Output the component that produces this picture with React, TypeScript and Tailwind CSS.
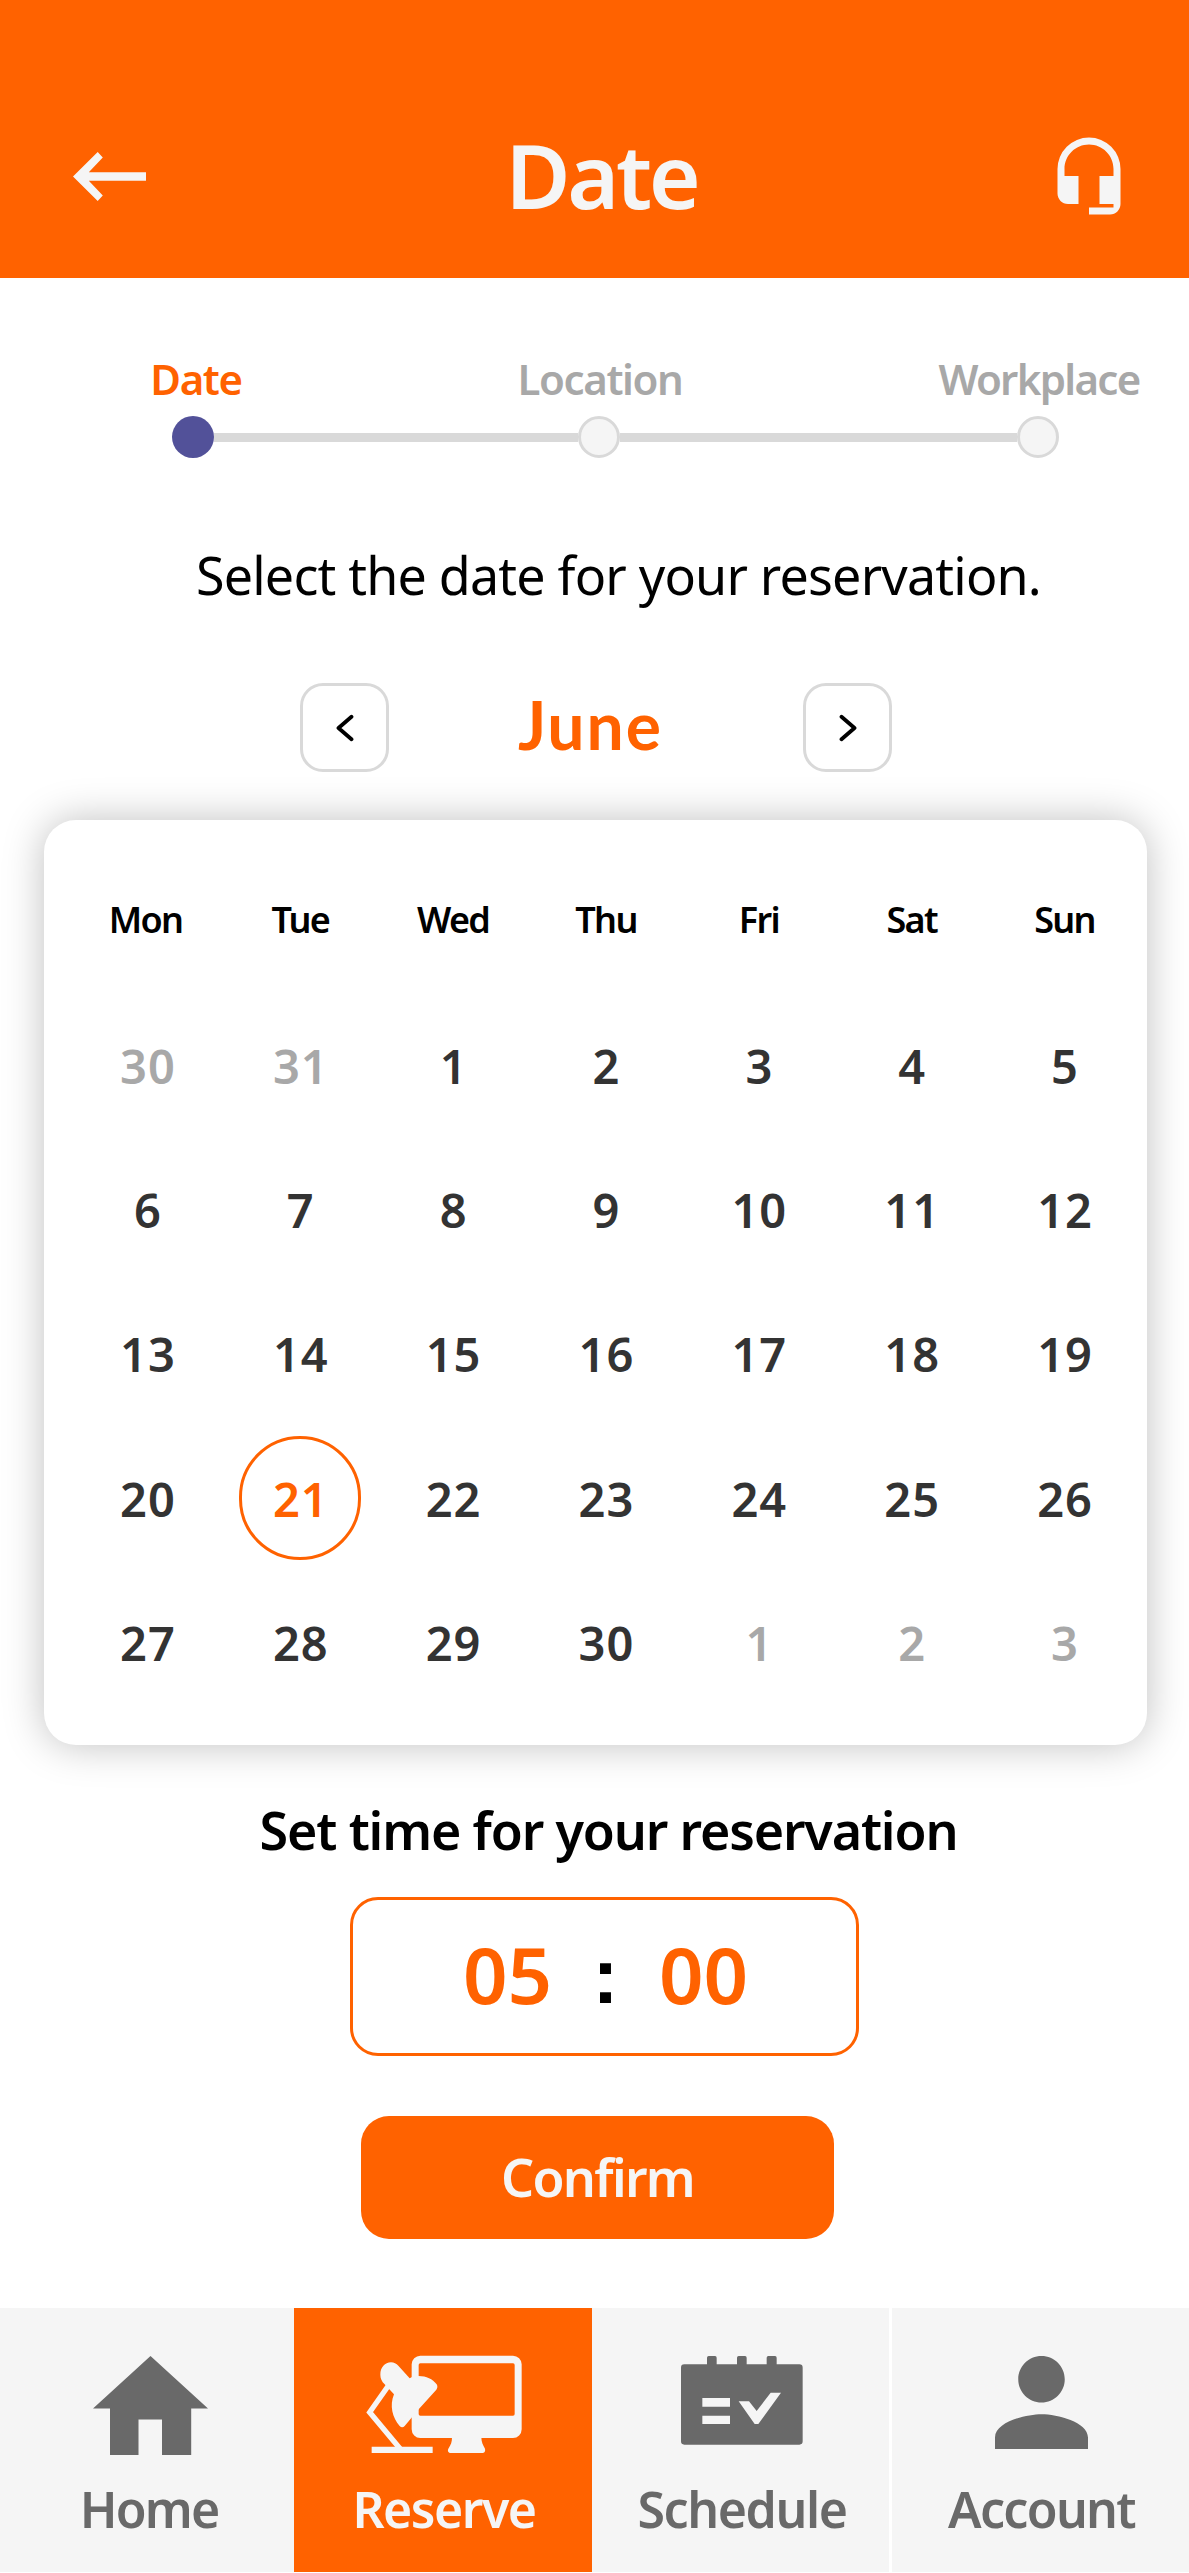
import { useState, type ReactNode } from "react";
import clsx from "clsx";
import { MdHeadsetMic } from "react-icons/md";

interface Day {
  label: number;
  outside?: boolean;
}

const WEEKDAYS = ["Mon", "Tue", "Wed", "Thu", "Fri", "Sat", "Sun"];

const DAYS: Day[] = [
  { label: 30, outside: true },
  { label: 31, outside: true },
  ...Array.from({ length: 30 }, (_, i) => ({ label: i + 1 })),
  { label: 1, outside: true },
  { label: 2, outside: true },
  { label: 3, outside: true },
];

const ArrowLeft = () => (
  <svg className="h-[49px] w-[73px]" viewBox="0 0 73 49" fill="currentColor">
    <path d="M0 24.5 24.7 0 29.8 5.4 15.8 20.3H73v8.4H15.8l14 14.9-5.1 5.4z" />
  </svg>
);

const Chevron = ({ flip }: { flip?: boolean }) => (
  <svg className={clsx("h-[28px] w-[18px]", flip && "-scale-x-100")} viewBox="0 0 18 28" fill="none" stroke="#000" strokeWidth="3.8" strokeLinecap="round" strokeLinejoin="round">
    <path d="M15.5 2.8 2.5 14l13 11.2" />
  </svg>
);

const HomeIcon = () => (
  <svg className="ml-0.5 h-[99px] w-[115px]" viewBox="0 0 115 99" fill="currentColor">
    <path d="M57.5 0 115 52.5H98.2V99H69V63.5H45.5V99H17V52.5H0z" />
  </svg>
);

const DeskIcon = () => (
  <svg className="-mt-px h-[99px] w-[156px]" viewBox="34 29 468 297" fill="currentColor">
    <path
      fillRule="evenodd"
      d="M197 31h278a26 26 0 0 1 26 26v195a26 26 0 0 1-26 26H197a26 26 0 0 1-26-26V57a26 26 0 0 1 26-26zM197 54a5 5 0 0 0-5 5v147a5 5 0 0 0 5 5h278a5 5 0 0 0 5-5V59a5 5 0 0 0-5-5z"
    />
    <path d="M292 276h88c0 14 5 24 11 34 2 8-2 13-8 13h-94c-8 0-11-6-8-13 8-12 11-20 11-34z" />
    <path d="M51 304h183v19H51z" />
    <path d="M137 311 45 201l56-80" fill="none" stroke="currentColor" strokeWidth="16" />
    <path d="M77 88c0-22 14-37 32-37 9 0 16 4 22 10l34 38c7-5 16-7 27-7 23 0 42 9 54 25 3 5 3 11-1 16l-53 59-42 50c-5 5-10 5-15 0-22-25-31-61-17-95l-28-30c-9-9-13-18-13-29z" />
  </svg>
);

const ScheduleIcon = () => (
  <svg className="h-[89px] w-[122px]" viewBox="33 33 366 267">
    <path
      fill="currentColor"
      d="M43 58h68V38a5 5 0 0 1 5-5h19a5 5 0 0 1 5 5v20h61V38a5 5 0 0 1 5-5h19a5 5 0 0 1 5 5v20h60V38a5 5 0 0 1 5-5h20a5 5 0 0 1 5 5v20h68a10 10 0 0 1 10 10v221a10 10 0 0 1-10 10H43a10 10 0 0 1-10-10V68a10 10 0 0 1 10-10z"
    />
    <path fill="#f5f5f5" d="M97 159h83v26H97zM97 212h83v25H97zM206 169h31l23 29 42-55h31l-68 94h-11z" />
  </svg>
);

const AccountIcon = () => (
  <svg className="h-[93px] w-[93px]" viewBox="4 4 16 16" fill="currentColor">
    <path d="M12 12c2.21 0 4-1.79 4-4s-1.79-4-4-4-4 1.79-4 4 1.79 4 4 4zm0 2c-2.67 0-8 1.34-8 4v2h16v-2c0-2.66-5.33-4-8-4z" />
  </svg>
);

const StepDot = ({ active }: { active?: boolean }) => (
  <span className={clsx("size-[42px] shrink-0 rounded-full", active ? "bg-[#525199]" : "border-[3px] border-[#d9d9d9] bg-[#f5f5f5]")} />
);

interface NavItemProps {
  label: string;
  icon: ReactNode;
  className: string;
  active?: boolean;
}

const NavItem = ({ label, icon, className, active }: NavItemProps) => (
  <button className={clsx("flex flex-col items-center pt-12", className, active ? "bg-[#ff6200] text-[#f5f5f5]" : "bg-[#f5f5f5] text-[#696969]")}>
    <span className="flex h-[119px] items-start">{icon}</span>
    <span className="text-[50px] leading-[68px] font-semibold">{label}</span>
  </button>
);

export default function App() {
  const [selected, setSelected] = useState(21);

  return (
    <div className="h-[2573px] w-[1189px] overflow-hidden bg-white font-['Noto_Sans',sans-serif] text-black">
      <header className="flex h-[278px] items-center justify-between bg-[#ff6200] pt-[74px] pr-[58px] pl-[73px] text-[#f5f5f5]">
        <button aria-label="Back"><ArrowLeft /></button>
        <h1 className="pb-[3px] pl-2.5 text-[89px] leading-[100px] font-semibold tracking-[-3.4px]">Date</h1>
        <button aria-label="Support"><MdHeadsetMic className="size-[84px]" /></button>
      </header>

      <section className="pt-[73px]">
        <div className="flex pl-[86px] text-center text-[42px] leading-[56px] font-semibold text-[#a8a8a8]">
          <p className="w-[220px] tracking-[-1.4px] text-[#ff6200]">Date</p>
          <p className="ml-[184px] w-[220px] tracking-[-1.4px]">Location</p>
          <p className="ml-[219px] w-[220px] tracking-[-1.7px]">Workplace</p>
        </div>
        <div className="mt-[9px] flex items-center pl-[172px]">
          <StepDot active />
          <span className="h-[9px] w-[364px] bg-[#d9d9d9]" />
          <StepDot />
          <span className="h-[9px] w-[397px] bg-[#d9d9d9]" />
          <StepDot />
        </div>
      </section>

      <p className="mt-[81px] pl-12 text-center text-[52px] leading-[72px] tracking-[-0.8px]">Select the date for your reservation.</p>

      <div className="mt-[72px] ml-[300px] flex h-[89px] w-[592px] items-center justify-between">
        <button aria-label="Previous month" className="flex size-[89px] items-center justify-center rounded-[23px] border-[3px] border-[#d9d9d9]">
          <Chevron />
        </button>
        <h2 className="pr-[11px] pb-[5px] font-['Lato',sans-serif] text-[66px] leading-[80px] font-bold tracking-[2px] text-[#ff6200]">June</h2>
        <button aria-label="Next month" className="flex size-[89px] items-center justify-center rounded-[23px] border-[3px] border-[#d9d9d9]">
          <Chevron flip />
        </button>
      </div>

      <section className="mt-12 ml-[44px] h-[925px] w-[1103px] rounded-[32px] bg-white pt-[75px] pr-[6px] pl-[27px] shadow-[0_0_40px_rgba(0,0,0,0.25)]">
        <div className="grid grid-cols-7 text-center text-[36px] leading-[50px] font-semibold tracking-[-1.7px]">
          {WEEKDAYS.map((day) => <span key={day} className="first:-ml-1">{day}</span>)}
        </div>
        <div className="mt-[48px] grid auto-rows-[144.3px] grid-cols-7">
          {DAYS.map(({ label, outside }, i) => {
            const isSelected = !outside && label === selected;
            return (
              <div key={i} className="flex items-center justify-center">
                <button
                  onClick={() => !outside && setSelected(label)}
                  className={clsx(
                    "h-[124px] w-[122px] rounded-full border-[3px] pt-0.5 pl-px text-[47px] leading-none font-semibold tracking-[1px]",
                    isSelected ? "border-[#ff6200] text-[#ff6200]" : "border-transparent",
                    !isSelected && (outside ? "text-[#a8a8a8]" : "text-[#333333]"),
                  )}
                >
                  {label}
                </button>
              </div>
            );
          })}
        </div>
      </section>

      <h3 className="mt-[49px] pl-7 text-center text-[52px] leading-[72px] font-semibold tracking-[-1.15px]">Set time for your reservation</h3>

      <div className="mt-[31px] ml-[350px] flex h-[159px] w-[509px] items-center justify-center rounded-[28px] border-[3px] border-[#ff6200] pb-1.5 pl-0.5 text-center text-[78px] leading-none font-semibold text-[#ff6200]">
        <span className="w-[98px]">05</span>
        <span className="w-[98px] pt-1 font-['Liberation_Sans',sans-serif] font-bold text-black">:</span>
        <span className="w-[98px]">00</span>
      </div>

      <button className="mt-[60px] ml-[361px] flex h-[123px] w-[473px] items-center justify-center rounded-[28px] bg-[#ff6200] pb-0.5 text-[52px] font-semibold tracking-[-1.7px] text-[#f5f5f5]">
        Confirm
      </button>

      <nav className="mt-[69px] flex h-[264px]">
        <NavItem label="Home" icon={<HomeIcon />} className="w-[294px] pl-1 tracking-[-1.8px]" />
        <NavItem label="Reserve" icon={<DeskIcon />} className="w-[298px] pl-0.5 tracking-[-1.5px]" active />
        <NavItem label="Schedule" icon={<ScheduleIcon />} className="w-[297px] pl-[3px] tracking-[-1.4px]" />
        <NavItem label="Account" icon={<AccountIcon />} className="ml-[3px] w-[297px] pl-0.5 tracking-[-1.7px]" />
      </nav>
    </div>
  );
}
